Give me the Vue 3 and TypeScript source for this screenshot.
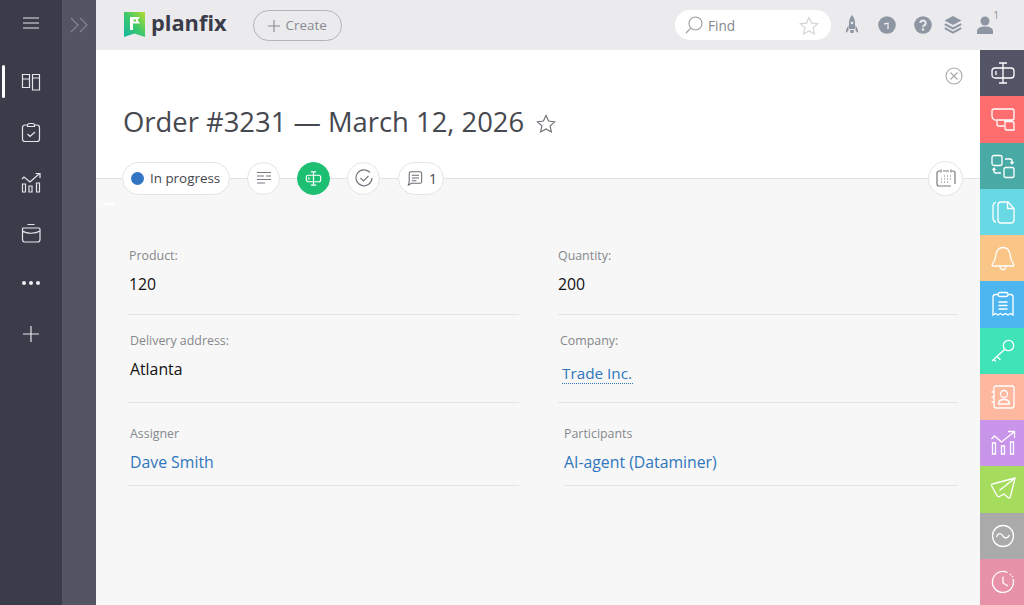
<script setup lang="ts">
interface SideItem { color: string; id: string }
const sideItems: SideItem[] = [
  { color: '#535566', id: 'field' },
  { color: '#ff6e6e', id: 'chat' },
  { color: '#4aaba6', id: 'link' },
  { color: '#67d8e4', id: 'files' },
  { color: '#fac688', id: 'bell' },
  { color: '#4db6f0', id: 'bill' },
  { color: '#40e3b8', id: 'key' },
  { color: '#ffb8a0', id: 'contact' },
  { color: '#c995ea', id: 'chart' },
  { color: '#a5dc5e', id: 'send' },
  { color: '#aaaaaa', id: 'wave' },
  { color: '#e892aa', id: 'clock' },
]
</script>

<template>
  <div class="app">
    <nav class="rail">
      <button class="rail-btn burger" aria-label="Menu">
        <svg width="18" height="14" viewBox="0 0 18 14"><path d="M1 2h16M1 7h16M1 12h16" /></svg>
      </button>
      <button class="rail-btn active" aria-label="Boards">
        <svg width="22" height="22" viewBox="0 0 22 22"><path d="M2.500 4.500h7v13h-7zM2.500 9h7M12.500 4.500h7v15.500h-7zM12.500 8h7" /></svg>
      </button>
      <button class="rail-btn" aria-label="Tasks">
        <svg width="22" height="22" viewBox="0 0 22 22"><path d="M7.500 4H5a2.500 2.500 0 0 0-2.500 2.500V18A2.500 2.500 0 0 0 5 20.500h12a2.500 2.500 0 0 0 2.500-2.500V6.500A2.500 2.500 0 0 0 17 4h-2.500M7.500 4.500a2 2 0 0 1 2-2h3a2 2 0 0 1 2 2v1h-7zM7.500 13l2.500 2.500 5-4.500" /></svg>
      </button>
      <button class="rail-btn" aria-label="Reports">
        <svg width="22" height="22" viewBox="0 0 22 22"><path d="M2.500 13h3v8h-3zM9 15h3v6H9zM16.500 12h3v9h-3zM2 8l2-2 6 5 9-8M15.500 2.500h4.500V7" /></svg>
      </button>
      <button class="rail-btn" aria-label="Cases">
        <svg width="22" height="22" viewBox="0 0 22 22"><path d="M7.500 2.500h7M3 6h16a1.500 1.500 0 0 1 1 1.500v10a2.500 2.500 0 0 1-2.500 2.500h-13A2.500 2.500 0 0 1 2.500 17.500v-10A1.500 1.500 0 0 1 3 6zM2.500 9c4 3 13 3 17.500 0" /></svg>
      </button>
      <button class="rail-btn" aria-label="More">
        <svg width="20" height="6" viewBox="0 0 20 6"><circle cx="3" cy="3" r="2" class="fill" /><circle cx="10" cy="3" r="2" class="fill" /><circle cx="17" cy="3" r="2" class="fill" /></svg>
      </button>
      <button class="rail-btn" aria-label="Add">
        <svg width="18" height="18" viewBox="0 0 18 18"><path d="M1 9h16M9 1v16" /></svg>
      </button>
    </nav>

    <div class="strip">
      <svg width="18" height="16" viewBox="0 0 18 16"><path d="M1 1l7 7-7 7M10 1l7 7-7 7" /></svg>
    </div>

    <div class="main">
      <header class="topbar">
        <div class="logo">
          <svg width="24" height="27" viewBox="0 0 24 27">
            <defs>
              <linearGradient id="lg" x1="1" y1="0" x2="0" y2="1">
                <stop offset="0" stop-color="#b6dd30" />
                <stop offset="0.5" stop-color="#3ec76a" />
                <stop offset="1" stop-color="#12b5a6" />
              </linearGradient>
            </defs>
            <path d="M1 1h21v25l-10.500-3.500L1 26z" fill="url(#lg)" />
            <path d="M7 19V6h10l-2.500 3 2.500 3.500h-7V19z" fill="#fff" />
            <path d="M10.500 8.500h2.500v2h-2.500z" fill="#6cd058" />
          </svg>
          <span class="logo-text">planfix</span>
        </div>
        <button class="create">
          <svg class="create-plus" width="12" height="12" viewBox="0 0 12 12"><path d="M0 6h12M6 0v12" /></svg>
          <span>Create</span>
        </button>
        <div class="spacer"></div>
        <div class="search">
          <svg width="18" height="18" viewBox="0 0 18 18" class="search-ico"><circle cx="10.500" cy="7.500" r="6.500" /><path d="M5.800 12.200L1 17" /></svg>
          <span class="search-text">Find</span>
          <svg width="20" height="19" viewBox="0 0 20 19" class="search-star"><path d="M10 1.500l2.600 5.600 6 .7-4.500 4.100 1.300 6L10 14.900l-5.400 3 1.300-6L1.400 7.800l6-.7z" /></svg>
        </div>
        <div class="tools">
          <svg class="t-rocket" width="14" height="20" viewBox="0 0 14 20"><path d="M7 0c2 2 3 5 3 8v6H4V8c0-3 1-6 3-8zM3.500 10L1 15v3l2.500-2.500zM10.500 10L13 15v3l-2.500-2.500zM5 15h4l-.5 3h-3z" fill="#8f96a3" /><circle cx="7" cy="8" r="1.300" fill="#ebebed" /></svg>
          <svg class="t-clock" width="18" height="18" viewBox="0 0 18 18"><circle cx="9" cy="9" r="8.800" fill="#8f96a3" /><path d="M6 8l4-.8V13" fill="none" stroke="#ebebed" stroke-width="1.300" /></svg>
          <svg class="t-help" width="18" height="18" viewBox="0 0 18 18"><circle cx="9" cy="9" r="8.800" fill="#8f96a3" /><path d="M6.300 7a2.700 2.500 0 1 1 4 2.200c-1 .6-1.300 1-1.300 2" fill="none" stroke="#ebebed" stroke-width="1.900" /><circle cx="9" cy="13.500" r="1.200" fill="#ebebed" /></svg>
          <svg class="t-layers" width="18" height="18" viewBox="0 0 18 18"><path d="M9 0l8.500 4.500L9 9 .5 4.500z" fill="#8f96a3" /><path d="M.8 8.200L9 12.500l8.200-4.300M.8 12.200L9 16.700l8.200-4.500" fill="none" stroke="#8f96a3" stroke-width="2" /></svg>
          <div class="t-user">
            <svg width="16" height="18" viewBox="0 0 16 18"><circle cx="8" cy="5" r="4.500" fill="#8f96a3" /><path d="M0 18v-2.500C0 12 3 10.500 8 10.500s8 1.500 8 5V18z" fill="#8f96a3" /></svg>
            <span class="t-badge">1</span>
          </div>
        </div>
      </header>

      <div class="content">
        <section class="page">
          <div class="page-head">
            <button class="close" aria-label="Close">
              <svg width="18" height="18" viewBox="0 0 18 18"><circle cx="9" cy="9" r="8" /><path d="M5.500 5.500l7 7M12.500 5.500l-7 7" /></svg>
            </button>
            <h1 class="title">
              <span>Order #3231 — March 12, 2026</span>
              <svg class="title-star" width="20" height="19" viewBox="0 0 20 19"><path d="M10 1.500l2.600 5.600 6 .7-4.500 4.100 1.300 6L10 14.900l-5.400 3 1.300-6L1.400 7.800l6-.7z" /></svg>
            </h1>
            <div class="actions">
              <div class="pill status"><span class="dot"></span>In progress</div>
              <button class="round" aria-label="Description">
                <svg width="16" height="14" viewBox="0 0 16 14"><path d="M1 1.500h14M1 5h7M10 5h5M1 8.500h14M1 12h8" /></svg>
              </button>
              <button class="round green" aria-label="Fields">
                <svg width="17" height="17" viewBox="0 0 26 26"><path d="M9 3h8M13 3v20M9 23h8M5 8h16a3 3 0 0 1 3 3v4a3 3 0 0 1-3 3H5a3 3 0 0 1-3-3v-4a3 3 0 0 1 3-3zM6 11v4" /></svg>
              </button>
              <button class="round" aria-label="Checklist">
                <svg width="18" height="18" viewBox="0 0 18 18"><path d="M15 3.500A8 8 0 1 0 17 9M5.500 9l3 3 5-5" /></svg>
              </button>
              <div class="pill comments">
                <svg width="16" height="16" viewBox="0 0 18 18"><path d="M4 2h11a2 2 0 0 1 1.500 2v9a2 2 0 0 1-2 2H5l-3.500 2 1-3.500V4A2 2 0 0 1 4 2zM5.500 6h8M5.500 9h8M5.500 12h5" /></svg>
                <span>1</span>
              </div>
              <div class="spacer"></div>
              <button class="round large" aria-label="Calendar">
                <svg width="20" height="20" viewBox="0 0 20 20"><path d="M4 3H3a2 2 0 0 0-2 2v11a2 2 0 0 0 2 2h12M16 3h1a2 2 0 0 1 2 2v11M5 1.500v3M15 1.500v3M7 3h6" /><path class="dots" d="M8 8h1M11 8h1M14 8h1M5 11h1M8 11h1M11 11h1M14 11h1M5 14h1M8 14h1M11 14h1" /></svg>
              </button>
            </div>
          </div>
          <span class="tick"></span>
          <div class="fields">
            <div class="field f-product"><div class="label">Product:</div><div class="value">120</div></div>
            <div class="field f-quantity"><div class="label">Quantity:</div><div class="value">200</div></div>
            <div class="field f-address"><div class="label">Delivery address:</div><div class="value">Atlanta</div></div>
            <div class="field f-company"><div class="label">Company:</div><div class="value link"><span class="dotted">Trade Inc.</span></div></div>
            <div class="field f-assigner"><div class="label">Assigner</div><div class="value link">Dave Smith</div></div>
            <div class="field f-participants"><div class="label">Participants</div><div class="value link">AI-agent (Dataminer)</div></div>
          </div>
        </section>

        <aside class="side">
          <div v-for="item in sideItems" :key="item.id" class="side-item" :style="{ background: item.color }">
            <svg viewBox="0 0 26 26">
              <template v-if="item.id === 'field'">
                <path d="M9 3h8M13 3v20M9 23h8M5 8h16a3 3 0 0 1 3 3v4a3 3 0 0 1-3 3H5a3 3 0 0 1-3-3v-4a3 3 0 0 1 3-3zM6 11v4" />
              </template>
              <template v-else-if="item.id === 'chat'">
                <path d="M4 3h18a2 2 0 0 1 2 2v7a2 2 0 0 1-2 2H6.500a4 4 0 0 1-4.500-3.500V5a2 2 0 0 1 2-2zM7 15v3a2 2 0 0 0 2 2h5M15 15.500h7a2 2 0 0 1 2 2V24h-7a2 2 0 0 1-2-2z" />
              </template>
              <template v-else-if="item.id === 'link'">
                <path d="M4 2.500h6a2 2 0 0 1 2 2v6a2 2 0 0 1-2 2H4a2 2 0 0 1-2-2v-6a2 2 0 0 1 2-2zM16 14.500h6a2 2 0 0 1 2 2v6a2 2 0 0 1-2 2h-6a2 2 0 0 1-2-2v-6a2 2 0 0 1 2-2zM15 6h5a2 2 0 0 1 2 2v2.500M20.500 9l1.500 1.800 1.500-1.800M11 20H6a2 2 0 0 1-2-2v-2.500M2.500 17L4 15.200 5.500 17" />
              </template>
              <template v-else-if="item.id === 'files'">
                <path d="M6 3C4 4 3 5 3 7v12c0 2 1 3.500 3 4.500M11 3h7l6 6.500V21a3 3 0 0 1-3 3H11a3 3 0 0 1-3-3V6a3 3 0 0 1 3-3zM17.500 3v6.500H24" />
              </template>
              <template v-else-if="item.id === 'bell'">
                <path d="M13 2.500c-4 0-6.500 3-7 7-.5 4.500-1.500 7-3.500 9.500a1.200 1.200 0 0 0 1 2h19a1.200 1.200 0 0 0 1-2c-2-2.500-3-5-3.500-9.500-.5-4-3-7-7-7zM10 21c0 2 1.200 3.500 3 3.500s3-1.500 3-3.500" />
              </template>
              <template v-else-if="item.id === 'bill'">
                <path d="M8 3.500H5.500A2.500 2.500 0 0 0 3 6v18l2.500-1.500L8 24l2.500-1.500 2.500 1.500 2.500-1.500L18 24l2.500-1.500L23 24V6a2.500 2.500 0 0 0-2.500-2.500H18M10 1.500h6a2 2 0 0 1 2 2 2 2 0 0 1-2 2h-6a2 2 0 0 1-2-2 2 2 0 0 1 2-2zM8.500 11h9M8.500 14.500h9M8.500 18h9" />
              </template>
              <template v-else-if="item.id === 'key'">
                <circle cx="18.500" cy="7.500" r="5.200" /><path d="M14.500 11.500L2 23M7 18.500l3.500 3.500M3.500 21.500l2.500 2" />
              </template>
              <template v-else-if="item.id === 'contact'">
                <path d="M6 2h16a2 2 0 0 1 2 2v18a2 2 0 0 1-2 2H6a2 2 0 0 1-2-2V4a2 2 0 0 1 2-2zM1.500 8H4M1.500 13H4M1.500 18H4" /><circle cx="14" cy="10" r="3.500" /><path d="M8.500 20c0-3.500 2-4.500 5.500-4.500s5.500 1 5.500 4.500z" />
              </template>
              <template v-else-if="item.id === 'chart'">
                <path d="M2.500 13h3v11h-3zM11.500 16h3v8h-3zM20.500 12h3v12h-3zM1.500 9l3-3 7 6L24 2M18 1.500h6.500V8" />
              </template>
              <template v-else-if="item.id === 'send'">
                <path d="M25 2L2.500 8c-1 .3-1.300 1-.8 2L5.500 17c1 2 2.500 4.500 4 3.500l4.500-2.500 4 3.500c1 .8 2 .5 2.300-.5zM25 2L9.500 14.500" />
              </template>
              <template v-else-if="item.id === 'wave'">
                <circle cx="13" cy="13" r="10.500" /><path d="M6.500 14c1-3 3-4 4.500-3s2.500 4 4.500 4 3-1 4-3" />
              </template>
              <template v-else>
                <path d="M17.500 3.500A10.500 10.500 0 1 0 23 10M13 7.500V14l5 3" /><path class="dash" d="M20 5l3 3" />
              </template>
            </svg>
          </div>
        </aside>
      </div>
    </div>
  </div>
</template>

<style>
html, body { margin: 0; padding: 0; }
</style>

<style scoped>
.app {
  display: flex;
  width: 1024px;
  height: 605px;
  overflow: hidden;
  font-family: "Open Sans", "Noto Sans", sans-serif;
  color: #333;
}
button {
  font: inherit;
  background: none;
  border: 0;
  padding: 0;
  cursor: pointer;
}
svg { display: block; }
.spacer { flex: 1; }

.rail {
  width: 62px;
  flex: none;
  background: #3a3c4a;
  display: flex;
  flex-direction: column;
  align-items: center;
}
.rail-btn {
  width: 62px;
  height: 50.5px;
  display: flex;
  align-items: center;
  justify-content: center;
  position: relative;
}
.rail-btn.burger { height: 46px; margin-bottom: 10px; }
.rail-btn svg { fill: none; stroke: #e6e6ea; stroke-width: 1.2; }
.rail-btn svg .fill { fill: #eeeef0; stroke: none; }
.rail-btn.active::before {
  content: "";
  position: absolute;
  left: 2px;
  top: 9px;
  width: 3px;
  height: 33px;
  border-radius: 2px;
  background: #fff;
}

.strip {
  width: 34px;
  flex: none;
  background: #535563;
  display: flex;
  justify-content: center;
  padding-top: 17px;
  box-sizing: border-box;
}
.strip svg { fill: none; stroke: #7f818d; stroke-width: 1.4; }

.main {
  flex: 1;
  display: flex;
  flex-direction: column;
  min-width: 0;
}
.topbar {
  height: 50px;
  flex: none;
  background: #ebebed;
  display: flex;
  align-items: center;
  padding-left: 27px;
  box-sizing: border-box;
}
.logo { display: flex; align-items: center; gap: 4px; margin-top: -1px; }
.logo-text {
  font-size: 21.8px;
  font-weight: 700;
  color: #3a3c4a;
  line-height: 28px;
  margin-top: -4px;
}
.create {
  margin-left: 26px;
  width: 89px;
  height: 31px;
  box-sizing: border-box;
  border: 1px solid #b4b4b8;
  border-radius: 16px;
  color: #888a90;
  font-size: 13.4px;
  display: flex;
  align-items: center;
  justify-content: center;
  gap: 6px;
}
.create-plus { fill: none; stroke: #888a90; stroke-width: 1.1; margin-top: 2px; }
.search {
  width: 156px;
  height: 30px;
  background: #fff;
  border-radius: 15px;
  display: flex;
  align-items: center;
  padding: 0 12px 0 10px;
  box-sizing: border-box;
}
.search-ico { fill: none; stroke: #9a9ca2; stroke-width: 1.1; }
.search-text { margin-left: 5px; color: #83878e; font-size: 13.6px; flex: 1; }
.search-star { fill: none; stroke: #d4d4d6; stroke-width: 1.2; }
.tools {
  display: flex;
  align-items: center;
  width: 193px;
  padding-left: 14px;
  box-sizing: border-box;
}
.t-clock { margin-left: 19px; }
.t-help { margin-left: 18px; }
.t-layers { margin-left: 12px; }
.t-user { display: flex; margin-left: 15px; position: relative; }
.t-badge {
  position: absolute;
  left: 16px;
  top: -8px;
  font-size: 11px;
  line-height: 14px;
  color: #8f96a3;
}

.content {
  flex: 1;
  display: flex;
  min-height: 0;
}
.page {
  flex: 1;
  background: #f7f7f7;
  position: relative;
  min-width: 0;
}
.page-head {
  background: #fff;
  height: 128px;
  border-bottom: 1px solid #e2e2e2;
  position: relative;
  padding: 0 17px 0 27px;
}
.close {
  position: absolute;
  right: 17px;
  top: 17px;
}
.close svg { fill: none; stroke: #a8a8aa; stroke-width: 1.1; }
.title {
  margin: 0;
  padding-top: 54px;
  display: flex;
  align-items: center;
  gap: 12px;
  font-size: 27.4px;
  line-height: 36px;
  font-weight: 400;
  color: #46484f;
  height: 36px;
}
.title-star { fill: none; stroke: #6a6c72; stroke-width: 1.1; margin-top: 2px; }
.actions {
  position: absolute;
  left: 26px;
  right: 17px;
  top: 110px;
  display: flex;
  align-items: center;
  height: 36px;
}
.pill {
  height: 33px;
  background: #fff;
  border: 1px solid #e4e4e4;
  border-radius: 17px;
  box-sizing: border-box;
  display: flex;
  align-items: center;
  font-size: 13.4px;
  color: #44464c;
}
.status { width: 108px; padding-left: 8px; gap: 6px; white-space: nowrap; }
.dot { width: 13px; height: 13px; border-radius: 50%; background: #3276c3; flex: none; }
.round {
  width: 33px;
  height: 33px;
  border-radius: 50%;
  background: #fff;
  border: 1px solid #e4e4e4;
  box-sizing: border-box;
  display: flex;
  align-items: center;
  justify-content: center;
  margin-left: 17px;
}
.round svg { fill: none; stroke: #777a80; stroke-width: 1.2; }
.round.green { background: #1dbf73; border-color: #1dbf73; }
.round.green svg { stroke: #fff; stroke-width: 1.8; }
.comments { width: 46px; margin-left: 18px; padding-left: 8px; gap: 6px; font-size: 14px; }
.comments svg { fill: none; stroke: #6b6d72; stroke-width: 1.2; }
.round.large { width: 35px; height: 35px; }
.tick {
  position: absolute;
  left: 7px;
  top: 153px;
  width: 11px;
  height: 2px;
  background: #fff;
}
.fields {
  display: grid;
  grid-template-columns: 391px 400px;
  column-gap: 39px;
  padding: 0 0 0 32px;
}
.field { border-bottom: 1px solid #e3e3e3; box-sizing: border-box; }
.label { font-size: 12.4px; line-height: 18px; color: #85878c; }
.value { font-size: 15.8px; line-height: 24px; color: #111; }
.value.link { color: #2f76bd; }
.dotted { border-bottom: 1px dotted #2f76bd; padding: 0 1px 0 0; }
.f-product { padding: 68px 0 0 1px; height: 136px; }
.f-quantity { padding: 68px 0 0 0; height: 136px; }
.f-product .value, .f-quantity .value { margin-top: 7px; }
.f-address { padding: 17px 0 0 2px; height: 88px; }
.f-company { padding: 17px 0 0 2px; height: 88px; }
.f-company .value { margin-left: 2px; margin-top: 11px; font-size: 15.3px; }
.f-address .value { margin-top: 7px; }
.f-assigner { padding: 22px 0 0 2px; height: 83px; }
.f-participants { padding: 22px 0 0 0; height: 83px; margin-left: 6px; }
.f-assigner .value, .f-participants .value { margin-top: 7px; }

.side {
  width: 44px;
  flex: none;
  display: grid;
  grid-template-rows: repeat(12, 1fr);
}
.side-item {
  display: flex;
  align-items: center;
  justify-content: center;
  padding-left: 2px;
}
.side-item svg { fill: none; stroke: #fff; stroke-width: 1.3; width: 26px; height: 26px; }
.side-item .dash { stroke-dasharray: 1.5 1.5; }
</style>
